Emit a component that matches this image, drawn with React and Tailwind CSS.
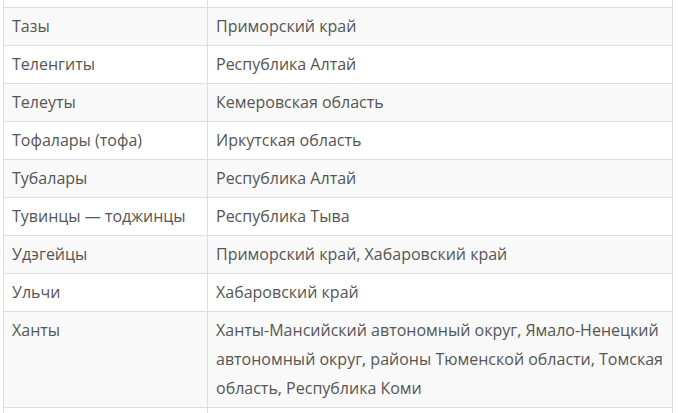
import React from 'react';

const rows = [
  ['', ''],
  ['Тазы', 'Приморский край'],
  ['Теленгиты', 'Республика Алтай'],
  ['Телеуты', 'Кемеровская область'],
  ['Тофалары (тофа)', 'Иркутская область'],
  ['Тубалары', 'Республика Алтай'],
  ['Тувинцы — тоджинцы', 'Республика Тыва'],
  ['Удэгейцы', 'Приморский край, Хабаровский край'],
  ['Ульчи', 'Хабаровский край'],
  ['Ханты', 'Ханты-Мансийский автономный округ, Ямало-Ненецкий автономный округ, районы Тюменской области, Томская область, Республика Коми'],
  ['', ''],
];

export default function App() {
  return (
    <div className="w-[678px] h-[413px] overflow-hidden bg-white pl-[3px] font-['Open_Sans',sans-serif]">
      <table className="mt-[-31px] w-[670px] border-collapse table-fixed text-[16px] leading-[29px] text-[#555]">
        <colgroup>
          <col className="w-[204px]" />
          <col />
        </colgroup>
        <tbody>
          {rows.map(([name, region], i) => (
            <tr key={i} className={i % 2 === 1 ? 'bg-[#f9f9f9]' : 'bg-white'}>
              <td className="h-[38px] border border-[#dedede] px-2 py-1 align-top">{name}</td>
              <td className="h-[38px] border border-[#dedede] px-2 py-1 align-top">{region}</td>
            </tr>
          ))}
        </tbody>
      </table>
    </div>
  );
}
